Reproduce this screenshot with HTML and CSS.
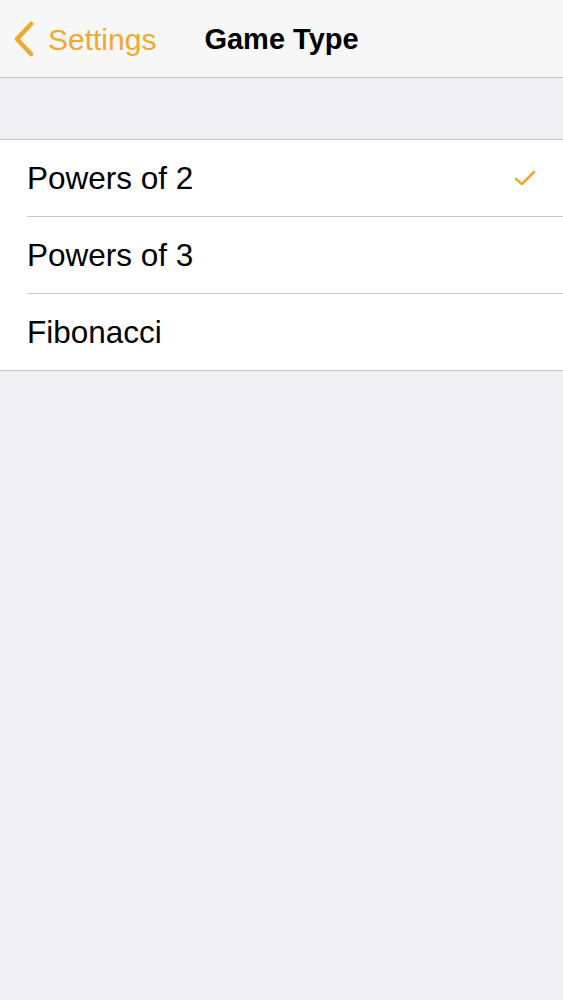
FILE: index.html
```html
<!DOCTYPE html>
<html>
<head>
	<meta charset="utf-8">
	<link rel="stylesheet" href="styles.css">
</head>
<body>
	<div class="navbar">
		<div class="back">
			<svg class="chevron" width="22" height="36" viewBox="0 0 22 36">
				<path d="M18 3 L4 18 L18 33" fill="none" stroke="#f0a92c" stroke-width="4.5" stroke-linecap="round" stroke-linejoin="round"/>
			</svg>
			<span class="back-label">Settings</span>
		</div>
		<div class="title">Game Type</div>
	</div>
	<div class="spacer"></div>
	<ul class="list">
		<li class="row"><span>Powers of 2</span>
			<svg class="check" width="24" height="20" viewBox="0 0 24 20">
				<path d="M3 11 L9 16 L21 4" fill="none" stroke="#f0a92c" stroke-width="2.6" stroke-linecap="round" stroke-linejoin="round"/>
			</svg>
		</li>
		<li class="row"><span>Powers of 3</span></li>
		<li class="row"><span>Fibonacci</span></li>
	</ul>
</body>
</html>
```
FILE: styles.css
```css
html, body {
	margin: 0;
	padding: 0;
	background: #efeff4;
	font-family: "Liberation Sans", Arial, sans-serif;
}

.navbar {
	height: 77px;
	box-sizing: border-box;
	height: 78px;
	padding-top: 2px;
	background: #f7f7f7;
	border-bottom: 1px solid #c8c7cc;
	display: flex;
	align-items: center;
}

.back {
	display: flex;
	align-items: center;
	padding-left: 13px;
	color: #f0a92c;
	font-size: 30px;
}

.chevron {
	margin-right: 13px;
	margin-top: -2px;
}

.title {
	margin-left: 48px;
	font-size: 29px;
	font-weight: bold;
	color: #000;
}

.spacer {
	height: 61px;
	border-bottom: 1px solid #c8c7cc;
}

.list {
	list-style: none;
	margin: 0;
	padding: 0 0 0 27px;
	background: #fff;
	border-bottom: 1px solid #c8c7cc;
}

.row {
	height: 76px;
	display: flex;
	align-items: center;
	justify-content: space-between;
	padding-right: 26px;
	font-size: 31.5px;
	color: #000;
	border-bottom: 1px solid #c8c7cc;
}

.row:last-child {
	border-bottom: none;
}
```
